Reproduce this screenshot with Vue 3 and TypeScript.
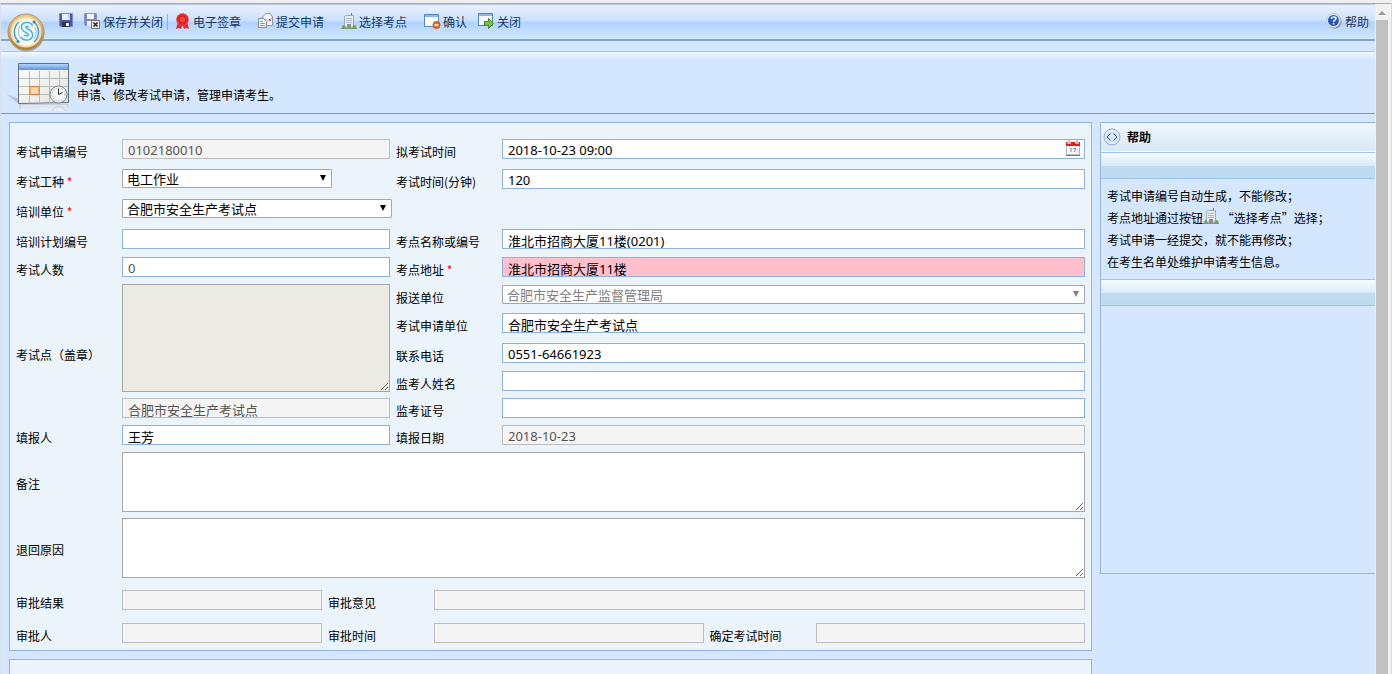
<script setup lang="ts">
import { reactive } from 'vue'

interface Field {
  id: string
  label: string
  kind: 'text' | 'select' | 'area' | 'date'
  tone?: 'locked' | 'alert' | 'dim'
  size: string
  required?: boolean
  hideLabel?: boolean
  control?: string
}

const leftFields: Field[] = [
  { id: 'applyNo', label: '考试申请编号', kind: 'text', tone: 'locked', size: 'h30' },
  { id: 'jobType', label: '考试工种', kind: 'select', size: 'h30', required: true, control: 'w-short' },
  { id: 'trainUnit', label: '培训单位', kind: 'select', size: 'h30', required: true, control: 'w-wide' },
  { id: 'planNo', label: '培训计划编号', kind: 'text', size: 'h28' },
  { id: 'count', label: '考试人数', kind: 'text', tone: 'dim', size: 'h27' },
  { id: 'stamp', label: '考试点（盖章）', kind: 'area', size: 'h114' },
  { id: 'stampName', label: '考试点名称', kind: 'text', tone: 'locked', size: 'h27', hideLabel: true },
  { id: 'reporter', label: '填报人', kind: 'text', size: 'h27' },
]

const rightFields: Field[] = [
  { id: 'examTime', label: '拟考试时间', kind: 'date', size: 'h30' },
  { id: 'minutes', label: '考试时间(分钟)', kind: 'text', size: 'h60' },
  { id: 'siteName', label: '考点名称或编号', kind: 'text', size: 'h28' },
  { id: 'siteAddr', label: '考点地址', kind: 'text', tone: 'alert', size: 'h28', required: true },
  { id: 'sendUnit', label: '报送单位', kind: 'select', tone: 'locked', size: 'h28' },
  { id: 'applyUnit', label: '考试申请单位', kind: 'text', size: 'h30' },
  { id: 'phone', label: '联系电话', kind: 'text', size: 'h28' },
  { id: 'proctor', label: '监考人姓名', kind: 'text', size: 'h27' },
  { id: 'proctorNo', label: '监考证号', kind: 'text', size: 'h27' },
  { id: 'reportDate', label: '填报日期', kind: 'text', tone: 'locked', size: 'h27' },
]

const columns = [
  { name: 'left', fields: leftFields },
  { name: 'right', fields: rightFields },
]

const notes = [
  { id: 'remark', label: '备注', size: 'h66' },
  { id: 'reason', label: '退回原因', size: 'h72' },
]

const form = reactive<Record<string, string>>({
  applyNo: '0102180010',
  jobType: '电工作业',
  trainUnit: '合肥市安全生产考试点',
  planNo: '',
  count: '0',
  stamp: '',
  stampName: '合肥市安全生产考试点',
  reporter: '王芳',
  examTime: '2018-10-23 09:00',
  minutes: '120',
  siteName: '淮北市招商大厦11楼(0201)',
  siteAddr: '淮北市招商大厦11楼',
  sendUnit: '合肥市安全生产监督管理局',
  applyUnit: '合肥市安全生产考试点',
  phone: '0551-64661923',
  proctor: '',
  proctorNo: '',
  reportDate: '2018-10-23',
  remark: '',
  reason: '',
  result: '',
  opinion: '',
  approver: '',
  approveTime: '',
  confirmTime: '',
})
</script>

<template>
  <div class="page">
    <svg class="defs" width="0" height="0" aria-hidden="true">
      <defs>
        <linearGradient id="gold" x1="0" y1="0" x2="0" y2="1">
          <stop offset="0" stop-color="#e9c98a" /><stop offset="1" stop-color="#b07c2c" />
        </linearGradient>
        <linearGradient id="calTop" x1="0" y1="0" x2="0" y2="1">
          <stop offset="0" stop-color="#b4d4ff" /><stop offset="1" stop-color="#5b95e0" />
        </linearGradient>
        <linearGradient id="calBody" x1="0" y1="0" x2="1" y2="1">
          <stop offset="0" stop-color="#ffffff" /><stop offset="1" stop-color="#e2e2dc" />
        </linearGradient>
        <symbol id="building" viewBox="0 0 16 16">
          <path d="M10.500 0v3" stroke="#b06060" />
          <path d="M3.500 3.500 5 2.500h7.500V14h-9z" fill="#e9edf2" stroke="#a3a8ad" />
          <path d="M5 5.500h6M5 7.500h6M5 9.500h6" stroke="#a9b9d6" />
          <path d="M6 11h4v4H6z" fill="#8b8f92" />
          <path d="M1 15c0-2 1-3 1.500-3S4 13 5 15zM15.500 15c0-2-1-3-1.500-3s-2 1-3 3z" fill="#6aa557" />
          <path d="M0 15.500h16" stroke="#7d9a72" />
        </symbol>
      </defs>
    </svg>

    <div class="main">
      <header class="toolbar">
        <svg class="logo" width="40" height="40" viewBox="0 0 40 40" aria-hidden="true">
          <circle cx="20.500" cy="21.500" r="18" fill="#7a8794" opacity=".6" />
          <circle cx="20" cy="20" r="18" fill="url(#gold)" stroke="#b9955a" />
          <circle cx="20" cy="20" r="14.500" fill="#fdf7e9" stroke="#f5dfae" stroke-width="2" />
          <path d="M13 10c-6 5-6 14-1 19M28 10c6 5 6 15 0 20" fill="none" stroke="#3b9fe0" stroke-width="1.500" />
          <path d="M14 14c-2 4-2 8 0 12M29 15c2 4 1 8-1 12" fill="none" stroke="#7cc4ee" />
          <path d="M24.500 14.500c-1-3-7-2.500-7 .5 0 4 7 3.500 7 8 0 3.500-6 4-8 1" fill="none" stroke="#38a8ee" stroke-width="5.500" />
          <path d="M24.500 14.500c-1-3-7-2.500-7 .5 0 4 7 3.500 7 8 0 3.500-6 4-8 1" fill="none" stroke="#e4f6ff" stroke-width="3" />
          <circle cx="12" cy="29.500" r="1.500" fill="#1e88d8" /><circle cx="28" cy="10" r="1.500" fill="#1e88d8" />
        </svg>

        <button class="tool t-save" type="button" aria-label="保存">
          <svg width="16" height="16" viewBox="0 0 16 16"><path d="M1.500.500h13v13h-12l-1-1z" fill="#4a55b8" stroke="#7d86d8" /><path d="M4 1h8v6H4z" fill="#eef2fb" /><path d="M10 1h2v5h-2z" fill="#c9d1e6" /><path d="M4 9h8v5H4z" fill="#30343f" /><path d="M8 10h3v3H8z" fill="#fff" /></svg>
        </button>
        <button class="tool t-saveclose" type="button">
          <svg width="17" height="17" viewBox="0 0 17 17"><path d="M.500.500h12v12h-11l-1-1z" fill="#7c88be" stroke="#8994c6" /><path d="M3 1h7v5H3z" fill="#f3f5fb" /><path d="M3 8h6v5H3z" fill="#eef" /><path d="M7.500 7.500h8v8h-8z" fill="#e9e9e2" stroke="#77776f" /><path d="m9.500 9.500 4 4m0-4-4 4" stroke="#222" stroke-width="1.500" /></svg>
          <span>保存并关闭</span>
        </button>
        <i class="split"></i>
        <button class="tool t-seal" type="button">
          <svg width="15" height="17" viewBox="0 0 15 17"><path d="M3 9 1 16l3-1 2 1 1.500-4L9 16l2-1 3 1-2-7z" fill="#e22a2a" /><circle cx="7.500" cy="6.500" r="6" fill="#ee2626" stroke="#f25050" stroke-dasharray="2 1" /><circle cx="7.500" cy="6.500" r="3.500" fill="#f54343" stroke="#c81919" /></svg>
          <span>电子签章</span>
        </button>
        <button class="tool t-submit" type="button">
          <svg width="17" height="16" viewBox="0 0 17 16"><path d="M5.500 4 9 .500h4L15.500 4v8.500h-10z" fill="#f7f7f7" stroke="#8d949d" /><path d="m6 5 5 3 4-3" fill="#e9edf2" stroke="#b9c0c8" /><path d="M12 6h2v2h-2z" fill="#e05535" /><path d="M1.500 5.500h5l3 3v6h-8z" fill="#fff" stroke="#7d8894" /><path d="M3 8.500h3M3 10.500h5M3 12.500h5" stroke="#7b98bd" /></svg>
          <span>提交申请</span>
        </button>
        <button class="tool t-site" type="button">
          <svg width="16" height="16"><use href="#building" /></svg>
          <span>选择考点</span>
        </button>
        <button class="tool t-ok" type="button">
          <svg width="17" height="16" viewBox="0 0 17 16"><path d="M.500 1.500h14v12H.500z" fill="#fff" stroke="#5585bd" /><path d="M1 2h13v2H1z" fill="#8ab8ec" /><circle cx="12.500" cy="12" r="3.500" fill="#e96f1e" stroke="#c94e0e" /><path d="M10.500 12h4" stroke="#fff" stroke-width="1.500" /></svg>
          <span>确认</span>
        </button>
        <button class="tool t-close" type="button">
          <svg width="17" height="16" viewBox="0 0 17 16"><path d="M.500.500h14v12H.500z" fill="#f4f9ff" stroke="#5585bd" /><path d="M1 1h13v2H1z" fill="#8ab8ec" /><path d="M6.500 8.500h4v-3l5 5-5 5v-3h-4z" fill="#7fbe4b" stroke="#3e8425" /></svg>
          <span>关闭</span>
        </button>
        <button class="tool t-help" type="button">
          <svg width="16" height="16" viewBox="0 0 16 16"><circle cx="8.500" cy="8.500" r="7" fill="#777c86" /><circle cx="7.500" cy="7.500" r="7" fill="#f6f6f6" stroke="#b5bac2" /><circle cx="7.500" cy="7.500" r="5.500" fill="#2257c0" /><path d="M5.500 6c0-3 4.500-2.500 4.500-.500S7.500 7 7.500 9M7.500 10v1.500" fill="none" stroke="#fff" stroke-width="1.500" /></svg>
          <span>帮助</span>
        </button>
      </header>

      <section class="banner">
        <svg class="calendar" width="64" height="50" viewBox="0 0 64 50" aria-hidden="true">
          <path d="M0 32 13 37v5z" fill="#b3c5dc" />
          <path d="M13 42h49v4L13 47z" fill="#c2cbd4" opacity=".7" />
          <path d="M15 43h46v6H15z" fill="#eff4f9" opacity=".6" />
          <path d="M12.500 1.500h50v39l-50 1z" fill="url(#calBody)" stroke="#60717f" />
          <path d="M13 2h49v6H13z" fill="url(#calTop)" />
          <path d="M13 16.500h49M13 24.500h49M13 32.500h49M23.500 9v32M33.500 9v32M43.500 9v32M53.500 9v32" stroke="#b7bfba" />
          <path d="M24 24.500h9v8h-9z" fill="#fad9b0" stroke="#d0793a" />
          <circle cx="52.500" cy="32.500" r="8.500" fill="#f4f6f8" stroke="#7a8087" />
          <circle cx="52.500" cy="32.500" r="6.500" fill="none" stroke="#8f959b" stroke-dasharray="1 2" />
          <path d="M52.500 26.500v6l4-2" fill="none" stroke="#30363c" />
          <path d="M46 49c1-5 11-6 14 0" fill="#e9eef2" stroke="#c3cad2" />
        </svg>
        <div>
          <h1>考试申请</h1>
          <p>申请、修改考试申请，管理申请考生。</p>
        </div>
      </section>

      <div class="content">
        <div class="work">
          <form class="panel" @submit.prevent>
            <div class="columns">
              <div v-for="col in columns" :key="col.name" :class="['col', col.name]">
                <div v-for="f in col.fields" :key="f.id" :class="['field', f.size, f.kind, { unlabelled: f.hideLabel }]">
                  <label v-if="!f.hideLabel" :for="f.id">{{ f.label }}<em v-if="f.required"> *</em></label>
                  <div v-if="f.kind === 'select'" :class="['pick', f.control, f.tone]">
                    <select :id="f.id" v-model="form[f.id]" :disabled="f.tone === 'locked'">
                      <option>{{ form[f.id] }}</option>
                    </select>
                    <svg width="8" height="7" viewBox="0 0 8 7"><path d="M1 0h6L4 6z" fill="currentColor" /></svg>
                  </div>
                  <textarea v-else-if="f.kind === 'area'" :id="f.id" v-model="form[f.id]" class="stamp" readonly></textarea>
                  <div v-else class="box">
                    <input :id="f.id" v-model="form[f.id]" type="text" :class="f.tone" :readonly="f.tone === 'locked'" :aria-label="f.hideLabel ? f.label : undefined" />
                    <button v-if="f.kind === 'date'" class="date-btn" type="button" aria-label="选择日期">
                      <svg width="16" height="16" viewBox="0 0 16 16"><path d="M1.500 2.500h13v12h-13z" fill="#fafafa" stroke="#b5b5b5" /><path d="M1 2h14v4H1z" fill="#d8231f" /><path d="M4 0v4M12 0v4" stroke="#fff" stroke-width="3" /><path d="M4 0v4M12 0v4" stroke="#8a8a8a" /><path d="m5 9 1-1v4M8 8.500h3L9 12" fill="none" stroke="#8d8d8d" /><path d="M11 12h3M11 10h3" stroke="#ddd" /><path d="M1 15.500h14" stroke="#777" /></svg>
                    </button>
                  </div>
                </div>
              </div>
            </div>

            <div v-for="n in notes" :key="n.id" :class="['field', 'note', n.size]">
              <label :for="n.id">{{ n.label }}</label>
              <textarea :id="n.id" v-model="form[n.id]"></textarea>
            </div>

            <div class="review h33">
              <label for="result">审批结果</label>
              <input id="result" v-model="form.result" class="locked" type="text" readonly />
              <label class="next" for="opinion">审批意见</label>
              <input id="opinion" v-model="form.opinion" class="locked" type="text" readonly />
            </div>
            <div class="review h27">
              <label for="approver">审批人</label>
              <input id="approver" v-model="form.approver" class="locked" type="text" readonly />
              <label class="next" for="approveTime">审批时间</label>
              <input id="approveTime" v-model="form.approveTime" class="locked" type="text" readonly />
              <label class="next" for="confirmTime">确定考试时间</label>
              <input id="confirmTime" v-model="form.confirmTime" class="locked" type="text" readonly />
            </div>
          </form>
          <section class="panel following"></section>
        </div>

        <aside class="help">
          <h2>
            <svg width="18" height="18" viewBox="0 0 18 18" aria-hidden="true"><circle cx="9" cy="9" r="8" fill="#d5e5f7" stroke="#93afd6" /><circle cx="9" cy="9" r="6.500" fill="none" stroke="#edf5fd" /><path d="M7.500 5.500 4 9l3.500 3.500M10.500 5.500 14 9l-3.500 3.500" fill="none" stroke="#375a94" /></svg>
            帮助
          </h2>
          <div class="band"></div>
          <div class="tips">
            <p>考试申请编号自动生成，不能修改；</p>
            <p>考点地址通过按钮<svg width="16" height="16" aria-hidden="true"><use href="#building" /></svg> “选择考点”选择；</p>
            <p>考试申请一经提交，就不能再修改；</p>
            <p>在考生名单处维护申请考生信息。</p>
          </div>
          <div class="band"></div>
        </aside>
      </div>
    </div>

    <div class="scrollbar" aria-hidden="true">
      <svg width="8" height="4" viewBox="0 0 8 4"><path d="M0 4 4 0l4 4z" fill="#9d9d9d" /></svg>
      <i></i>
    </div>
  </div>
</template>

<style>
html,
body {
  background: #d5e7ff;
}
</style>

<style scoped>
* {
  box-sizing: border-box;
}

.page {
  display: flex;
  height: 100vh;
  padding-top: 3px;
  overflow: hidden;
  background: #efefef;
  color: #000;
  font: 12px/16px "Noto Sans CJK SC", "Noto Sans", sans-serif;
}

.defs {
  position: absolute;
}

.main {
  display: flex;
  flex: 1;
  flex-direction: column;
  min-width: 0;
  border-top: 1px solid #adadad;
  border-left: 1px solid #dcdfe5;
  background: #d5e7ff;
}

button {
  padding: 0;
  border: 0;
  background: none;
  color: inherit;
  font: inherit;
  cursor: pointer;
}

.toolbar {
  position: relative;
  z-index: 1;
  display: flex;
  align-items: center;
  flex: none;
  height: 37px;
  padding: 0 6px 0 57px;
  border-top: 1px solid #b5c3f0;
  border-bottom: 2px solid #7ca6da;
  background: linear-gradient(#e9f2ff 0, #c9e0ff 16px, #b0d2ff 17px, #d2e7ff 34px);
  color: #14375f;
}

.logo {
  position: absolute;
  top: 7px;
  left: 5px;
}

.tool {
  display: flex;
  align-items: center;
  gap: 2px;
  white-space: nowrap;
}

.tool svg {
  margin-bottom: 2px;
}

.t-saveclose {
  margin-left: 10px;
}

.split {
  width: 1px;
  height: 16px;
  margin: 0 7px 0 4px;
  background: #8fb2dd;
}

.t-seal {
  gap: 3px;
}

.t-submit {
  margin-left: 16px;
}

.t-site,
.t-ok {
  margin-left: 17px;
}

.t-close {
  margin-left: 11px;
}

.t-help {
  margin-left: auto;
  gap: 3px;
}

.banner {
  display: flex;
  flex: none;
  height: 73px;
  padding: 21px 0 0 5px;
  border-bottom: 1px solid #6f9bd0;
  background: linear-gradient(#d5e7ff 10px, #b2c2ee 10px, #b2c2ee 11px, #eff7ff 11px, #cde5ff 20px, #d5e7ff 20px);
}

.banner h1,
.banner p {
  margin: 0 0 0 7px;
  font-size: 12px;
  line-height: 16px;
}

.banner h1 {
  margin-top: 9px;
}

.content {
  display: flex;
  flex: 1;
  gap: 8px;
  min-height: 0;
  padding: 8px 0 0 8px;
}

.work {
  display: flex;
  flex: 1;
  flex-direction: column;
  gap: 8px;
  min-width: 0;
}

.panel {
  flex: none;
  padding: 16px 6px 0;
  border: 1px solid #98b3e2;
  background: #ebf3fb;
}

.following {
  flex: 1;
  min-height: 16px;
  border-bottom: 0;
}

.columns {
  display: flex;
}

.col.left {
  flex: none;
  width: 380px;
}

.col.right {
  flex: 1;
  min-width: 0;
}

.field,
.review {
  display: flex;
}

.unlabelled {
  padding-left: 106px;
}

.h27 { height: 27px; }
.h28 { height: 28px; }
.h30 { height: 30px; }
.h33 { height: 33px; }
.h60 { height: 60px; }
.h66 { height: 66px; }
.h72 { height: 72px; }
.h114 { height: 114px; }

label {
  flex: none;
  width: 106px;
  line-height: 26px;
  white-space: nowrap;
}

label em {
  color: #f00;
  font-style: normal;
}

.area label {
  line-height: 142px;
}

.note label {
  line-height: 64px;
}

input,
select,
textarea {
  display: block;
  margin: 0;
  border: 1px solid #8cb1dd;
  border-radius: 0;
  background: #fff;
  color: #000;
  font: 13px/18px "Noto Sans", "Noto Sans CJK SC", sans-serif;
}

input {
  width: 100%;
  height: 20px;
  padding: 2px 5px 0;
}

.box {
  position: relative;
  flex: 1;
}

.left .box {
  flex: none;
  width: 268px;
}

input.locked {
  border-color: #bdbdbd;
  background: #f4f4f4;
  color: #555;
}

input.alert {
  background: #ffc0cb;
}

input.dim {
  color: #555;
}

.date-btn {
  position: absolute;
  top: 1px;
  right: 4px;
  height: 16px;
}

.date-btn svg {
  display: block;
}

.pick {
  position: relative;
  flex: 1;
}

.pick.w-short {
  flex: none;
  width: 210px;
}

.pick.w-wide {
  flex: none;
  width: 270px;
}

.pick select {
  width: 100%;
  height: 19px;
  padding: 1px 20px 0 4px;
  appearance: none;
  border-color: #a6a6a6;
  border-radius: 1px;
  line-height: 16px;
  opacity: 1;
}

.pick svg {
  position: absolute;
  top: 6px;
  right: 5px;
  pointer-events: none;
}

.pick.locked,
.pick.locked select {
  color: #808080;
}

textarea {
  flex: 1;
  height: 60px;
  border-color: #a6a6a6;
}

textarea.stamp {
  flex: none;
  width: 268px;
  height: 108px;
  background: #ebebe4;
}

.review input {
  flex: 1;
  width: 0;
}

.review label + input:nth-child(2) {
  flex: none;
  width: 200px;
}

.review .next {
  margin-left: 6px;
}

.help {
  flex: none;
  align-self: flex-start;
  width: 275px;
  min-height: 452px;
  border: 1px solid #98b3e2;
  border-right: 0;
}

.help h2 {
  display: flex;
  align-items: center;
  gap: 6px;
  height: 29px;
  margin: 0;
  padding-left: 2px;
  border-bottom: 1px solid #fff;
  background: linear-gradient(#eff6fb, #d7e9f5);
  font-size: 12px;
}

.band {
  height: 27px;
  border: solid #9bc5e8;
  border-width: 1px 0;
  background: linear-gradient(#f7fcff, #d9ebf6 13px, #c0dcf0 13px, #bddbf0);
}

.tips {
  padding: 6px 6px;
}

.tips p {
  height: 22px;
  margin: 0;
  line-height: 22px;
  white-space: nowrap;
}

.tips svg {
  vertical-align: -1px;
}

.scrollbar {
  display: flex;
  flex: none;
  flex-direction: column;
  align-items: center;
  width: 17px;
  padding-top: 7px;
  padding-right: 2px;
  border-top: 1px solid #adadad;
  border-right: 1px solid #dadada;
  background: #f1f1f1;
}

.scrollbar i {
  flex: 1;
  width: 12px;
  margin-top: 5px;
  background: #c1c1c1;
}
</style>
